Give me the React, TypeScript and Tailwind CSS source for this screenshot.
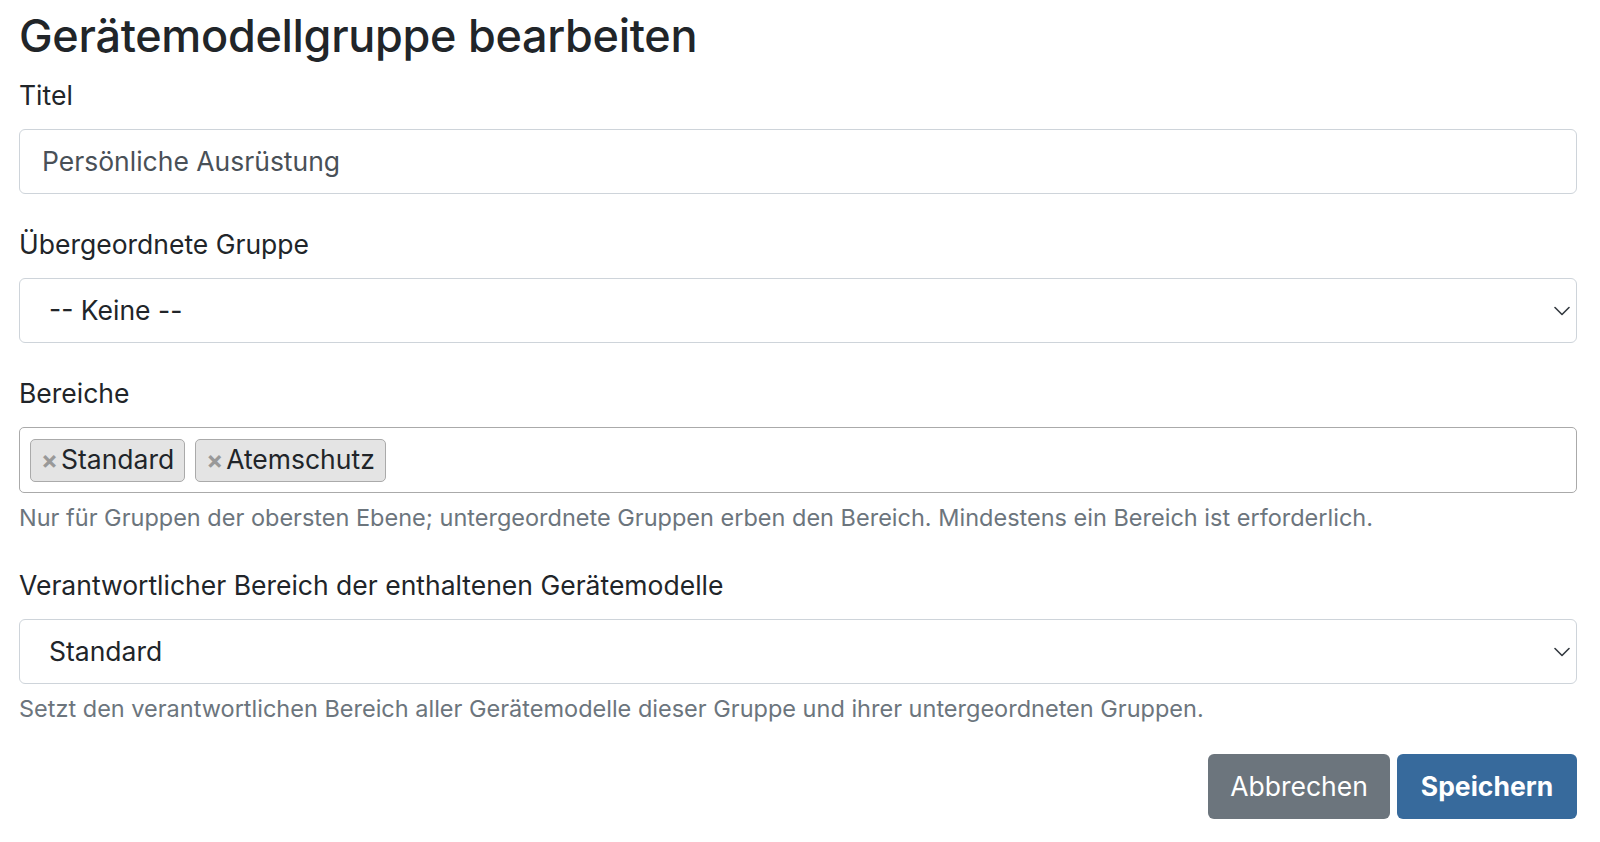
const font = "font-['Inter','Noto_Sans',sans-serif]";

function Label({ children }: { children: React.ReactNode }) {
  return <label className="block text-[26.5px] leading-[40px] text-[#212529] mb-[14px]">{children}</label>;
}

function Chevron() {
  return (
    <svg width="16" height="10" viewBox="0 0 16 10" fill="none" stroke="#343a40" strokeWidth="1.6" strokeLinecap="round" strokeLinejoin="round">
      <path d="M1 1.5l7 7 7-7" />
    </svg>
  );
}

function Select({ value }: { value: string }) {
  return (
    <div className="flex items-center h-[65px] rounded-[6px] border border-[#ced4da] bg-white pl-[29px] pr-[6px]">
      <span className="flex-1 text-[26.5px] text-[#212529]">{value}</span>
      <Chevron />
    </div>
  );
}

function Tag({ text }: { text: string }) {
  return (
    <span className="flex items-center h-[43px] rounded-[5px] border border-[#aaa] bg-[#e4e4e4] px-[10px] text-[26.5px] text-[#212529]">
      <span className="text-[#999] text-[25px] font-bold mr-[3px] leading-none">×</span>
      {text}
    </span>
  );
}

export default function App() {
  return (
    <div className={`${font} bg-white pl-[19px] pr-[23px] pb-[20px]`}>
      <h2 className="text-[45px] leading-[52px] font-medium text-[#212529] pt-[10px] mb-[13px] tracking-[-0.3px]">
        Gerätemodellgruppe bearbeiten
      </h2>

      <Label>Titel</Label>
      <div className="flex items-center h-[65px] rounded-[6px] border border-[#ced4da] bg-white px-[22px] text-[26.5px] text-[#495057]">
        Persönliche Ausrüstung
      </div>

      <div className="mt-[30px]">
        <Label>Übergeordnete Gruppe</Label>
        <Select value="-- Keine --" />
      </div>

      <div className="mt-[30px]">
        <Label>Bereiche</Label>
        <div className="flex items-center gap-[10px] h-[66px] rounded-[5px] border border-[#aaa] bg-white px-[10px]">
          <Tag text="Standard" />
          <Tag text="Atemschutz" />
        </div>
        <p className="mt-[7px] text-[23.5px] leading-[35px] text-[#6c757d]">
          Nur für Gruppen der obersten Ebene; untergeordnete Gruppen erben den Bereich. Mindestens ein Bereich ist erforderlich.
        </p>
      </div>

      <div className="mt-[30px]">
        <Label>Verantwortlicher Bereich der enthaltenen Gerätemodelle</Label>
        <Select value="Standard" />
        <p className="mt-[7px] text-[23.5px] leading-[35px] text-[#6c757d]">
          Setzt den verantwortlichen Bereich aller Gerätemodelle dieser Gruppe und ihrer untergeordneten Gruppen.
        </p>
      </div>

      <div className="flex justify-end gap-[7px] mt-[28px]">
        <button className="h-[65px] w-[182px] rounded-[6px] bg-[#6c757d] text-white text-[26.5px]">Abbrechen</button>
        <button className="h-[65px] w-[180px] rounded-[6px] bg-[#376a9c] text-white text-[26.5px] font-bold">Speichern</button>
      </div>
    </div>
  );
}
